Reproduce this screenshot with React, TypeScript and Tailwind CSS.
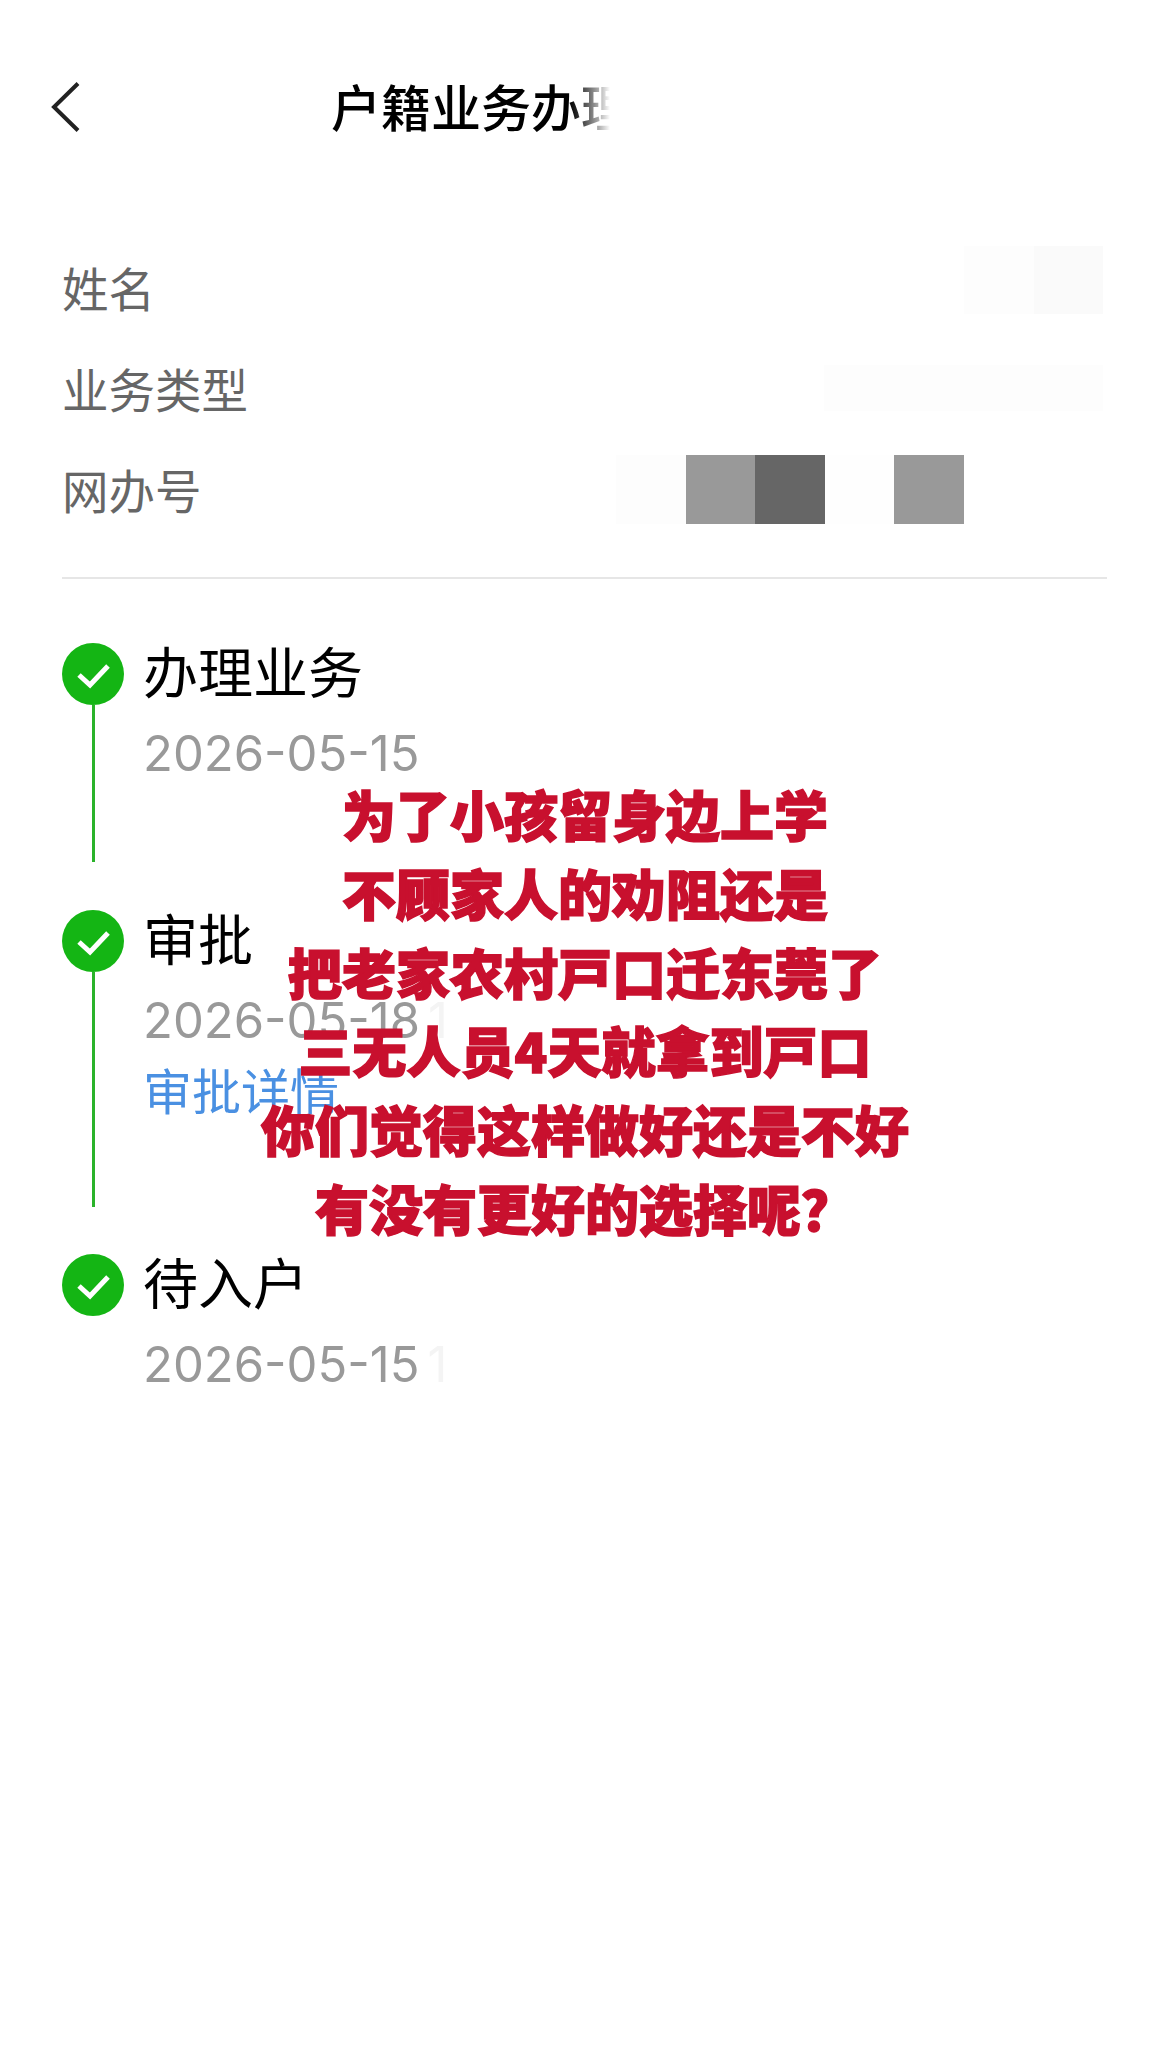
const infoFont = { fontFamily: '"Noto Sans CJK SC", sans-serif' };

const mosaic = [
	"bg-[#fdfdfd]",
	"bg-[#999999]",
	"bg-[#666666]",
	"bg-[#fefefe]",
	"bg-[#999999]",
];

const captionLines = [
	"为了小孩留身边上学",
	"不顾家人的劝阻还是",
	"把老家农村戸口迁东莞了",
	"三无人员4天就拿到戸口",
	"你们觉得这样做好还是不好",
	"有没有更好的选择呢？",
];

const StepIcon = () => (
	<div className="w-[62px] h-[62px] rounded-full bg-[#14b514] flex items-center justify-center shrink-0">
		<svg width="62" height="62" viewBox="0 0 62 62" fill="none">
			<path d="M17 32L28 42L46 23" stroke="#fff" strokeWidth="5" strokeLinejoin="miter" />
		</svg>
	</div>
);

const DateText = ({ date, tail }: { date: string; tail?: boolean }) => (
	<p className="mt-[19px] h-[60px] leading-[60px] text-[49px] text-[#999999] font-['Inter',sans-serif] -ml-[1px]">
		{date}
		{tail && <span className="ml-[8px] text-[#f4f4f4]">1</span>}
	</p>
);

const App = () => {
	return (
		<div className="relative w-[1170px] h-[2053px] bg-white overflow-hidden font-['Noto_Sans_CJK_SC',sans-serif]">
			<div className="h-[216px] flex items-center pl-[51px]">
				<svg width="30" height="50" viewBox="0 0 30 50" fill="none" className="-mt-[3px]">
					<path d="M27 1.5L3 25L27 48.5" stroke="#222" strokeWidth="4" />
				</svg>
				<h1 className="ml-[250px] w-[300px] h-[60px] text-[50px] leading-[54px] font-medium whitespace-nowrap overflow-hidden text-transparent bg-clip-text bg-linear-to-r from-black from-[78%] to-white to-[93%]">
					户籍业务办理
				</h1>
			</div>

			<div className="mt-[20px] px-[62px] text-[#666666] text-[46.5px]" style={infoFont}>
				<div className="h-[101.3px] flex items-center justify-between pr-[5px]">
					<span>姓名</span>
					<div className="flex mb-[13px]">
						<div className="w-[70px] h-[68px] bg-[#fdfdfd]" />
						<div className="w-[69px] h-[68px] bg-[#fafafa]" />
					</div>
				</div>
				<div className="h-[101.3px] flex items-center justify-between pr-[5px]">
					<span>业务类型</span>
					<div className="w-[279px] h-[46px] bg-[#fdfdfd]" />
				</div>
				<div className="h-[101.3px] flex items-center justify-between pr-[144px]">
					<span>网办号</span>
					<div className="flex">
						{mosaic.map((item, index) => (
							<div key={index} className={`w-[69.6px] h-[69px] ${item}`} />
						))}
					</div>
				</div>
			</div>

			<div className="mt-[37px] mx-[62px] w-[1045px] h-[2px] bg-[#e6e6e6]" />

			<div className="mt-[64px] px-[62px]">
				<div className="flex gap-[20px] h-[267px]">
					<div className="flex flex-col items-center">
						<StepIcon />
						<div className="w-[3px] h-[157px] bg-[#2ab32a]" />
					</div>
					<div>
						<p className="h-[62px] leading-[52px] text-[55px] text-black -ml-[1px]">办理业务</p>
						<DateText date="2026-05-15" />
					</div>
				</div>

				<div className="flex gap-[20px] h-[344px]">
					<div className="flex flex-col items-center">
						<StepIcon />
						<div className="w-[3px] h-[235px] bg-[#2ab32a]" />
					</div>
					<div>
						<p className="h-[62px] leading-[52px] text-[55px] text-black -ml-[1px]">审批</p>
						<DateText date="2026-05-18" tail />
						<p className="mt-[8px] h-[60px] leading-[60px] text-[49px] text-[#4a90e2] -ml-[1px]">审批详情</p>
					</div>
				</div>

				<div className="flex gap-[20px]">
					<StepIcon />
					<div>
						<p className="h-[62px] leading-[52px] text-[55px] text-black -ml-[1px]">待入户</p>
						<DateText date="2026-05-15" tail />
					</div>
				</div>
			</div>

			<div className="absolute left-0 top-[775px] w-[1170px] flex flex-col items-center">
				{captionLines.map((line, index) => (
					<p
						key={index}
						className="h-[78.8px] leading-[78px] text-[54px] font-black text-[#c8102e] whitespace-nowrap [-webkit-text-stroke:1.5px_#c8102e]"
					>
						{line}
					</p>
				))}
			</div>
		</div>
	);
};

export default App;
